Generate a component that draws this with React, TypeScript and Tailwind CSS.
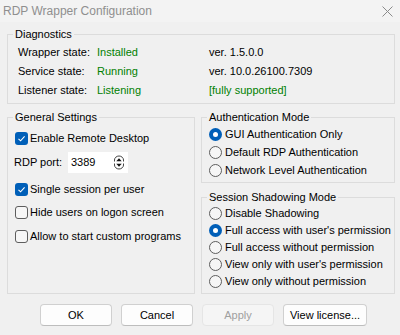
import React from "react";

const Check = ({ checked, label }: { checked?: boolean; label: string }) => (
  <div className="flex items-center gap-[2px]">
    {checked ? (
      <span className="flex h-[13px] w-[13px] items-center justify-center rounded-[3px] bg-[#005fb8]">
        <svg width="11" height="11" viewBox="0 0 11 11">
          <path d="M2.5 5.8 L4.6 7.8 L8.6 3.4" stroke="#fff" strokeWidth="1.1" fill="none" />
        </svg>
      </span>
    ) : (
      <span className="h-[13px] w-[13px] rounded-[3px] border border-[#5d5d5d] bg-[#f6f6f6]" />
    )}
    <span>{label}</span>
  </div>
);

const Radio = ({ checked, label }: { checked?: boolean; label: string }) => (
  <div className="flex h-[17px] items-center gap-[3px]">
    {checked ? (
      <span className="flex h-[13px] w-[13px] items-center justify-center rounded-full bg-[#005fb8]">
        <span className="h-[5px] w-[5px] rounded-full bg-white" />
      </span>
    ) : (
      <span className="h-[13px] w-[13px] rounded-full border border-[#5d5d5d] bg-[#f6f6f6]" />
    )}
    <span>{label}</span>
  </div>
);

const Group = ({ title, className, children }: { title: string; className: string; children: React.ReactNode }) => (
  <fieldset className={`border border-[#dcdcdc] ${className}`}>
    <legend className="ml-[5px] px-[2px] leading-[16px]">{title}</legend>
    {children}
  </fieldset>
);

const Button = ({ label, disabled, w = "w-[72px]" }: { label: string; disabled?: boolean; w?: string }) => (
  <button
    className={`h-[22px] ${w} rounded-[4px] border text-[11px] ${
      disabled
        ? "border-[#e5e5e5] bg-[#f5f5f5] text-[#a0a0a0]"
        : "border-[#d0d0d0] border-b-[#bdbdbd] bg-[#fdfdfd] text-black"
    }`}
  >
    {label}
  </button>
);

export default function App() {
  return (
    <div className="h-[335px] w-[400px] bg-[#f0f0f0] font-['Liberation_Sans',sans-serif] text-[11px] text-black">
      <div className="flex h-[22px] items-center justify-between bg-[#f3f3f3] pl-[3px] pr-[7px]">
        <span className="text-[12px] text-[#8f8f8f]">RDP Wrapper Configuration</span>
        <svg width="11" height="11" viewBox="0 0 11 11">
          <path d="M0.5 0.5 L10.5 10.5 M10.5 0.5 L0.5 10.5" stroke="#8a8a8a" strokeWidth="1" />
        </svg>
      </div>

      <div className="pl-[7px] pr-[5px]">
        <Group title="Diagnostics" className="mt-[4px] h-[78px]">
          <div className="grid grid-cols-[79px_112px_1fr] pl-[10px] pt-[1px] leading-[19px]">
            <span>Wrapper state:</span>
            <span className="text-[#008000]">Installed</span>
            <span>ver. 1.5.0.0</span>
            <span>Service state:</span>
            <span className="text-[#008000]">Running</span>
            <span>ver. 10.0.26100.7309</span>
            <span>Listener state:</span>
            <span className="text-[#008000]">Listening</span>
            <span className="text-[#008000]">[fully supported]</span>
          </div>
        </Group>

        <div className="mt-[5px] flex gap-[6px]">
          <Group title="General Settings" className="h-[185px] w-[188px] shrink-0">
            <div className="flex flex-col pl-[7px]">
              <div className="mt-[3px] flex h-[20px] items-center">
                <Check checked label="Enable Remote Desktop" />
              </div>
              <div className="-ml-[1px] mt-[4px] flex h-[21px] items-center">
                <span className="w-[54px]">RDP port:</span>
                <div className="flex h-[21px] w-[60px] items-center justify-between bg-white pl-[3px] pr-[3px]">
                  <span>3389</span>
                  <svg width="12" height="15" viewBox="0 0 12 15">
                    <path d="M1.5 6.5V5a4.5 4 0 0 1 9 0v1.5" stroke="#444" fill="none" />
                    <path d="M3.3 6.2 L6 3.2 L8.7 6.2Z" fill="#111" />
                    <path d="M1.5 8.5V10a4.5 4 0 0 0 9 0V8.5" stroke="#444" fill="none" />
                    <path d="M3.3 8.8 L6 11.8 L8.7 8.8Z" fill="#111" />
                  </svg>
                </div>
              </div>
              <div className="mt-[6px] flex h-[20px] items-center">
                <Check checked label="Single session per user" />
              </div>
              <div className="mt-[3px] flex h-[20px] items-center">
                <Check label="Hide users on logon screen" />
              </div>
              <div className="mt-[4px] flex h-[20px] items-center">
                <Check label="Allow to start custom programs" />
              </div>
            </div>
          </Group>

          <div className="flex flex-1 flex-col">
            <Group title="Authentication Mode" className="h-[74px]">
              <div className="flex flex-col pl-[7px] pt-[0.5px] [&>div]:h-[18px]">
                <Radio checked label="GUI Authentication Only" />
                <Radio label="Default RDP Authentication" />
                <Radio label="Network Level Authentication" />
              </div>
            </Group>
            <Group title="Session Shadowing Mode" className="mt-[6px] h-[105px]">
              <div className="flex flex-col pl-[7px]">
                <Radio label="Disable Shadowing" />
                <Radio checked label="Full access with user's permission" />
                <Radio label="Full access without permission" />
                <Radio label="View only with user's permission" />
                <Radio label="View only without permission" />
              </div>
            </Group>
          </div>
        </div>
      </div>

      <div className="mt-[10px] flex gap-[9px] pl-[40px]">
        <Button label="OK" />
        <Button label="Cancel" />
        <Button label="Apply" disabled />
        <Button label="View license..." w="w-[84px]" />
      </div>
    </div>
  );
}
